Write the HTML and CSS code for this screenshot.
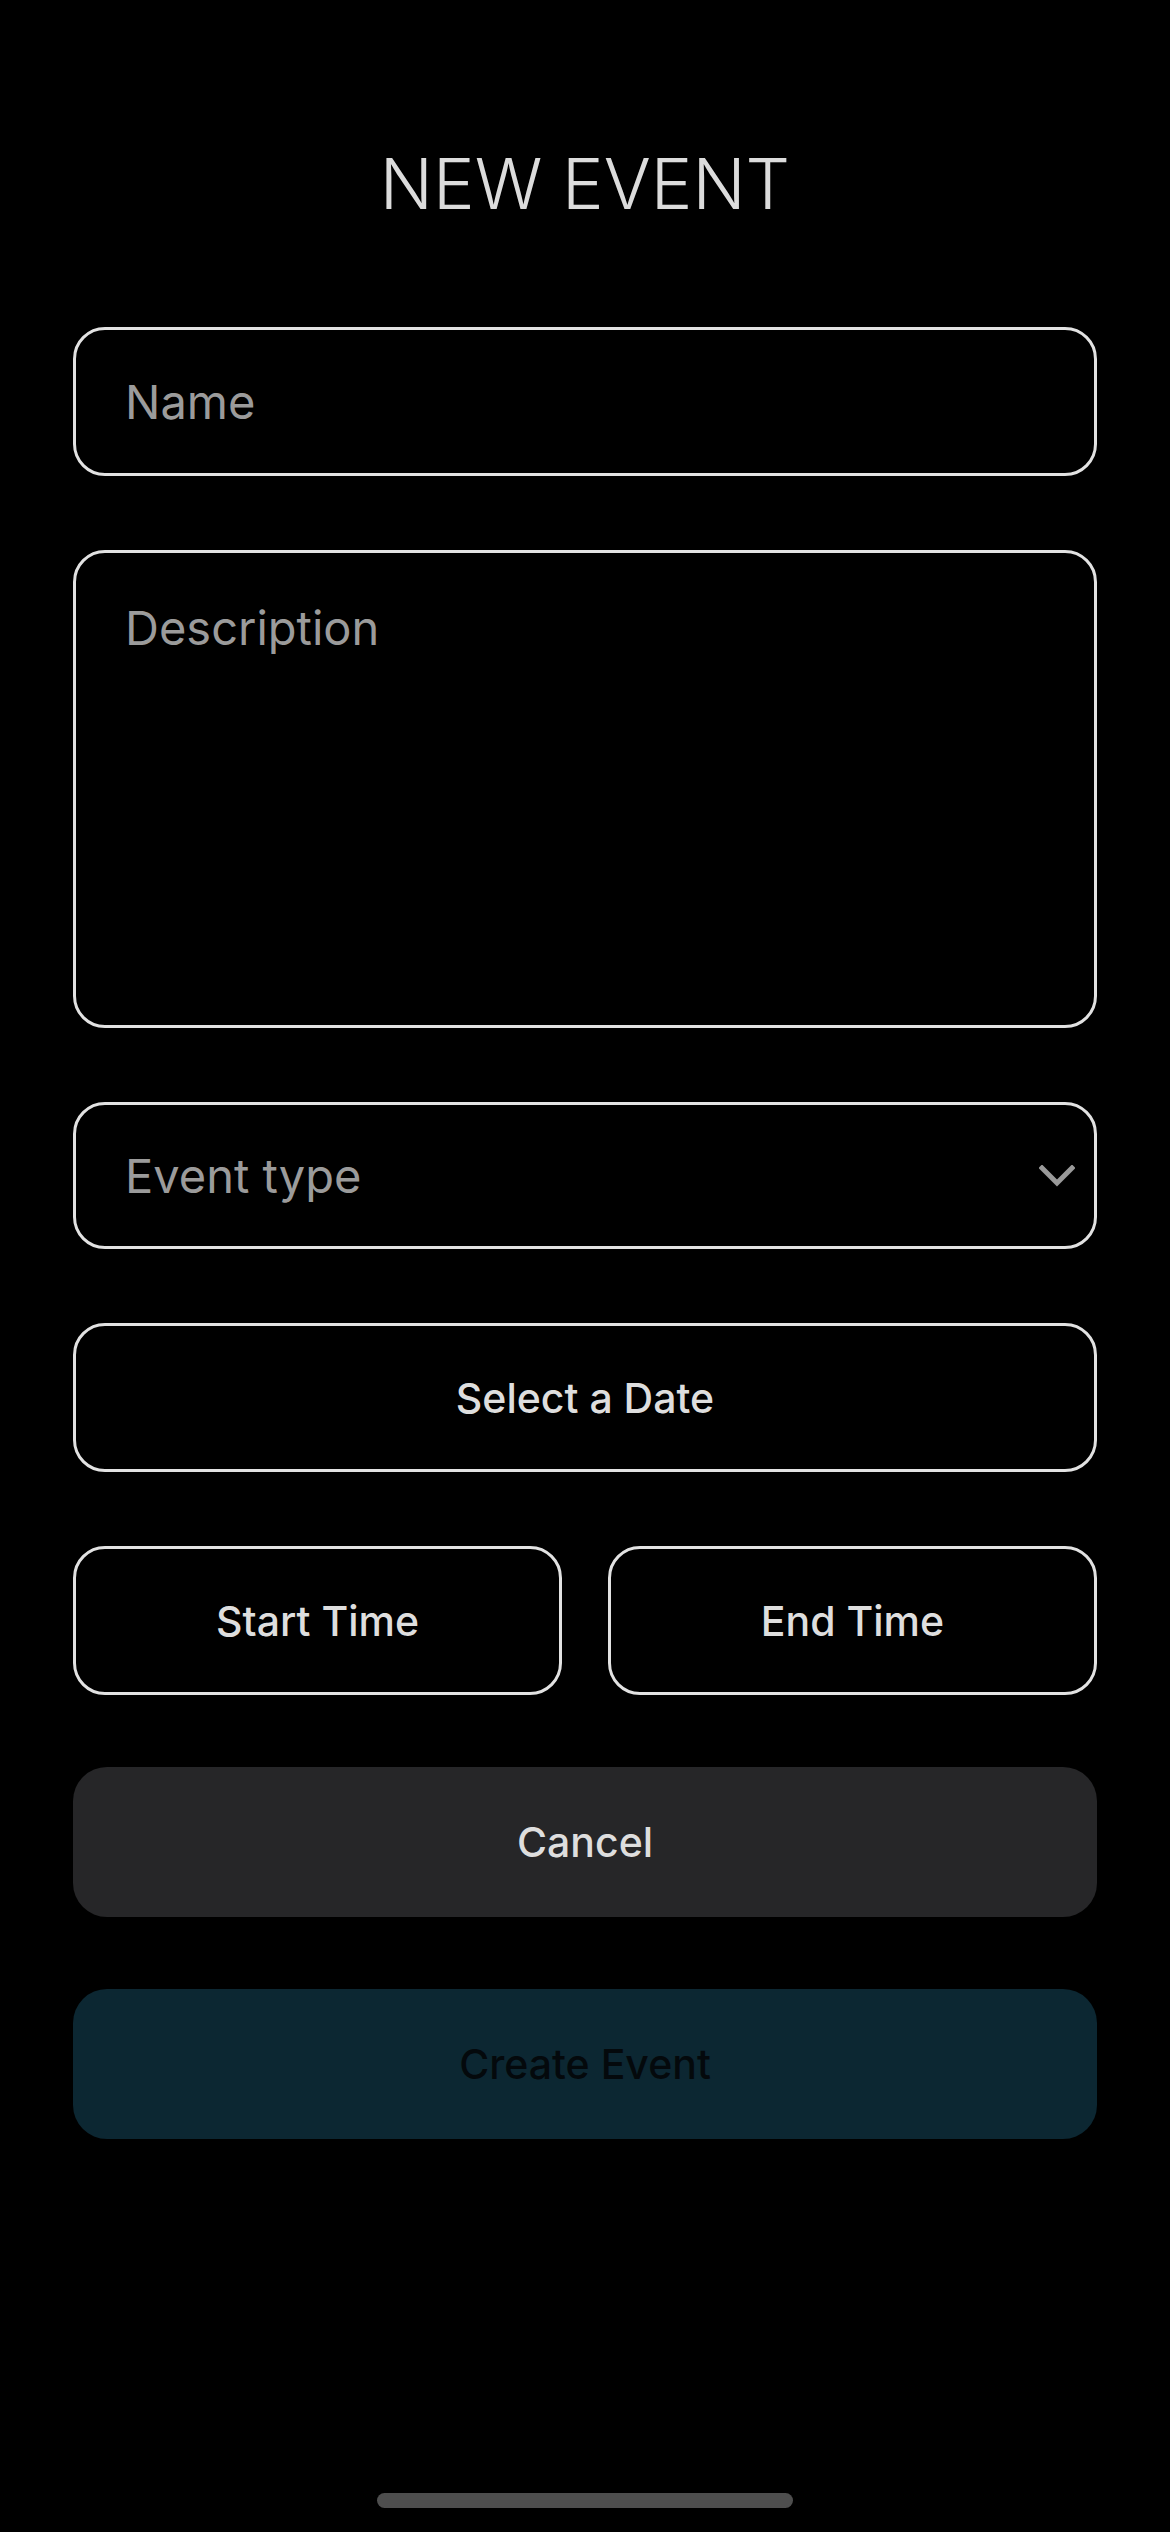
FILE: index.html
```html
<!DOCTYPE html>
<html lang="en">
<head>
<meta charset="utf-8">
<title>New Event</title>
<link rel="stylesheet" href="styles.css">
</head>
<body>
<main class="screen">
  <h1 class="title">NEW EVENT</h1>
  <form class="form">
    <div class="field field-input"><span class="placeholder">Name</span></div>
    <div class="field field-textarea"><span class="placeholder">Description</span></div>
    <div class="field field-select">
      <span class="placeholder">Event type</span>
      <svg class="chevron" width="36" height="22" viewBox="0 0 36 22" aria-hidden="true">
        <path d="M3 3 L18 18 L33 3" fill="none" stroke="#9a9a9a" stroke-width="5" stroke-linecap="square" stroke-linejoin="miter"/>
      </svg>
    </div>
    <button type="button" class="field btn-outline">Select a Date</button>
    <div class="time-row">
      <button type="button" class="field btn-outline">Start Time</button>
      <button type="button" class="field btn-outline">End Time</button>
    </div>
    <div class="actions">
      <button type="button" class="btn btn-cancel">Cancel</button>
      <button type="button" class="btn btn-create">Create Event</button>
    </div>
  </form>
  <div class="home-indicator"></div>
</main>
</body>
</html>
```

FILE: styles.css
```css
html, body {
  margin: 0;
  padding: 0;
  background: #000;
}

.screen {
  width: 1170px;
  height: 2532px;
  box-sizing: border-box;
  padding: 0 73px;
  display: flex;
  flex-direction: column;
  font-family: Inter, "Noto Sans", "Liberation Sans", sans-serif;
  color: #dedede;
}

.title {
  margin: 140px 0 0;
  height: 114px;
  font-size: 70px;
  line-height: 88px;
  font-weight: 300;
  text-align: center;
  color: #dcdcdc;
  letter-spacing: 0;
}

.form {
  margin-top: 73px;
  display: flex;
  flex-direction: column;
  gap: 74px;
}

.field {
  box-sizing: border-box;
  height: 149px;
  border: 3px solid #e2e2e2;
  border-radius: 32px;
  background: #000;
  display: flex;
  align-items: center;
  padding: 0 49px;
  font-family: inherit;
}

.placeholder {
  font-size: 47px;
  color: #9b9b9b;
  font-weight: 400;
}

.field-textarea {
  height: 478px;
  align-items: flex-start;
  padding-top: 46px;
}

.field-select {
  height: 147px;
  justify-content: space-between;
  padding-right: 19px;
}

.chevron {
  display: block;
}

.btn-outline {
  justify-content: center;
  font-size: 41px;
  font-weight: 500;
  color: #dedede;
  cursor: pointer;
}

.time-row {
  display: flex;
  gap: 46px;
}

.time-row .btn-outline {
  flex: 1;
}

.actions {
  margin-top: -2px;
  display: flex;
  flex-direction: column;
  gap: 72px;
}

.btn {
  box-sizing: border-box;
  height: 150px;
  border: none;
  border-radius: 34px;
  font-family: inherit;
  font-size: 41px;
  font-weight: 500;
  cursor: pointer;
}

.btn-cancel {
  background: #262628;
  color: #dedede;
}

.btn-create {
  background: #0c2732;
  color: #04090c;
}

.home-indicator {
  margin: auto auto 24px;
  width: 416px;
  height: 15px;
  border-radius: 8px;
  background: #4e4e4e;
}
```
